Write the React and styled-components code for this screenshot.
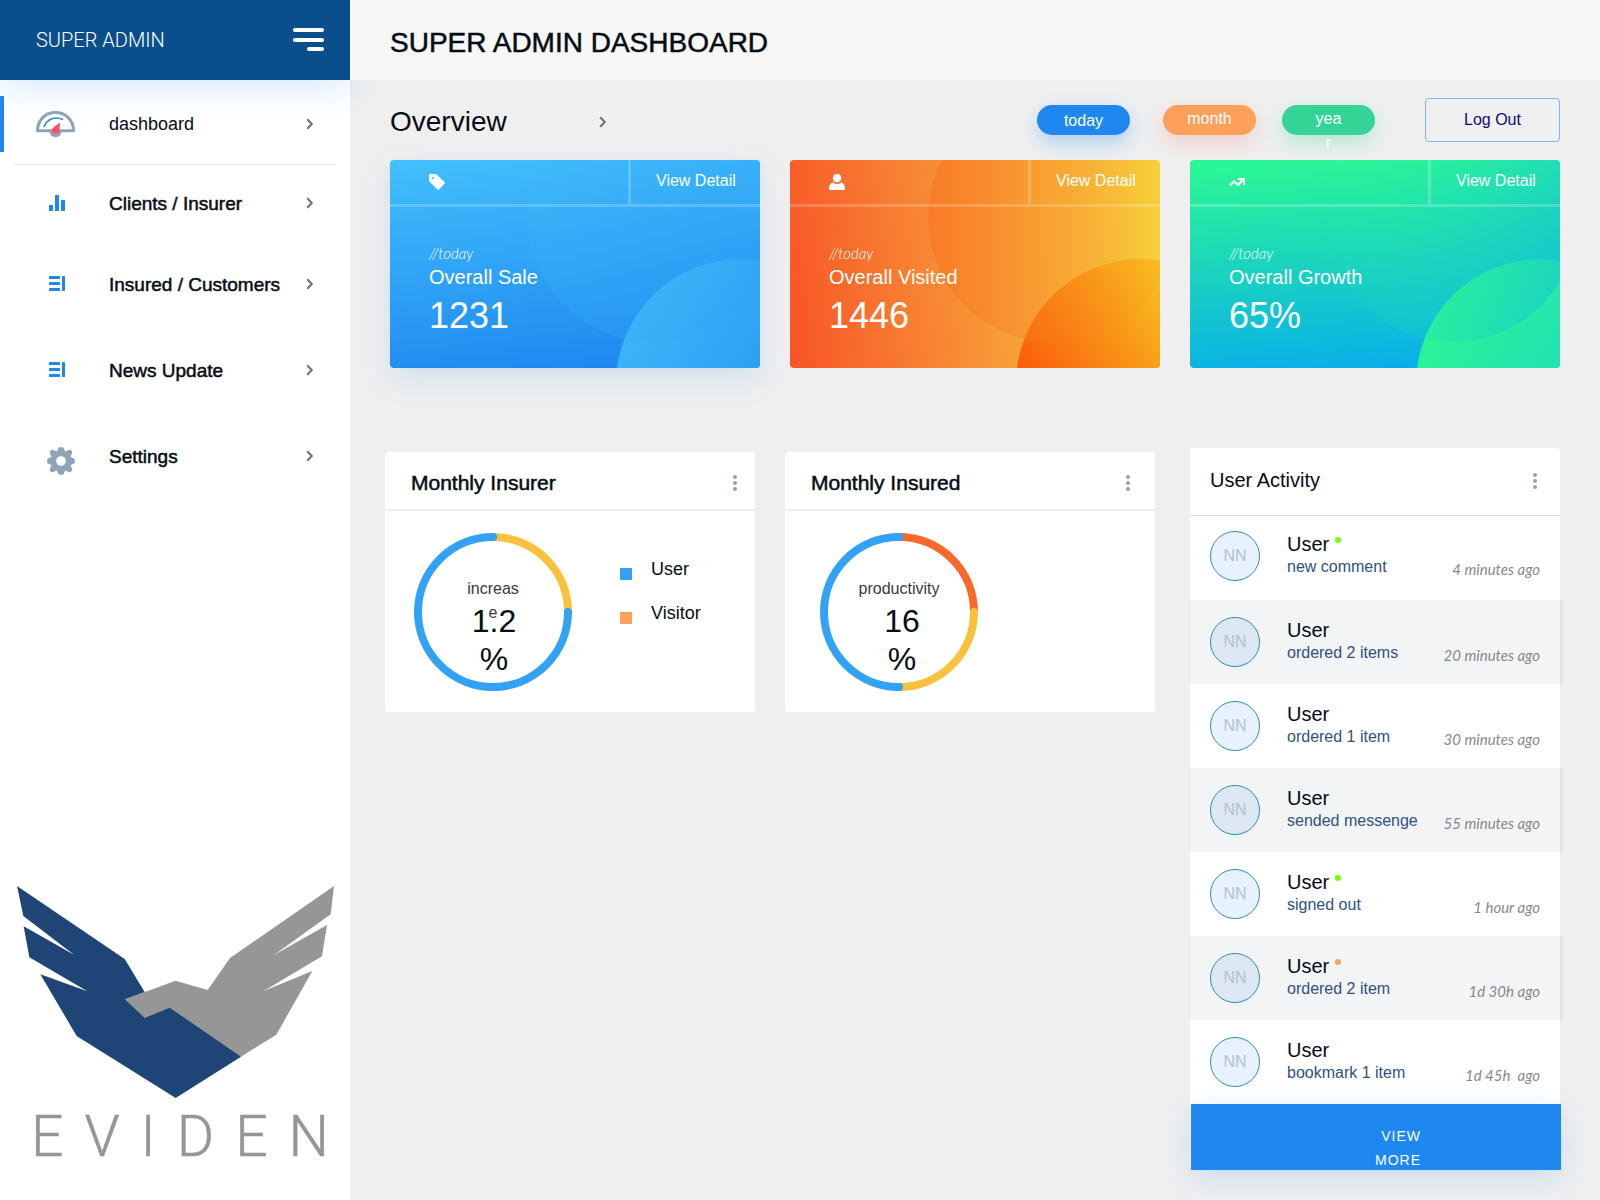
import React from "react";
import styled, { createGlobalStyle, css } from "styled-components";

const GlobalStyle = createGlobalStyle`
  *, *::before, *::after { box-sizing: border-box; }
  body {
    margin: 0;
    background: #efefef;
    color: #040d14;
    font-family: "Liberation Sans", Arial, Helvetica, sans-serif;
  }
  h1, h2, h3, p, ul { margin: 0; padding: 0; }
  ul { list-style: none; }
  button { font-family: inherit; cursor: pointer; border: 0; padding: 0; background: none; }
  a { color: inherit; text-decoration: none; }
  svg { display: block; flex: none; }
`;

const medium = css`
  font-weight: 400;
  -webkit-text-stroke: 0.5px currentColor;
`;

const Page = styled.div`
  display: flex;
  min-height: 100vh;
`;

/* Sidebar */

const Sidebar = styled.aside`
  flex: none;
  width: 350px;
  display: flex;
  flex-direction: column;
  background: #fff;
  padding-bottom: 33px;
`;

const SidebarHead = styled.div`
  display: flex;
  align-items: center;
  justify-content: space-between;
  height: 80px;
  padding: 0 26px 0 36px;
  background: #0a4e8c;
  color: #fff;
  box-shadow: 0 10px 30px rgba(30, 135, 240, 0.16);
`;

const Role = styled.span`
  font: 300 20px/24px Roboto, "Liberation Sans", sans-serif;
`;

const NavItem = styled.li`
  ${(p) =>
    p.$active
      ? css`
          padding: 16px 0 12px;
          border-bottom: 1px solid #e8e8e8;
          border-image: linear-gradient(90deg, transparent 15px, #e6e6e6 15px, #e6e6e6 calc(100% - 15px), transparent calc(100% - 15px)) 1;
        `
      : ""}
`;

const NavLink = styled.a`
  display: flex;
  align-items: center;
  height: ${(p) => p.$height}px;
  padding-right: 36px;
  border-left: 4px solid ${(p) => (p.$active ? "#1e87f0" : "transparent")};
  font-size: ${(p) => (p.$active ? 18 : 19)}px;
  ${(p) => (p.$active ? "" : medium)}
`;

const NavIcon = styled.span`
  width: 105px;
  padding-left: ${(p) => p.$inset}px;
  padding-top: ${(p) => p.$drop || 0}px;
`;

const NavLabel = styled.span`
  flex: 1;
  padding-top: ${(p) => (p.$active ? 0 : 2)}px;
`;

const Brand = styled.div`
  margin-top: auto;
  padding-left: 17px;
`;

const BrandName = styled.div`
  margin: 9px 0 0 14px;
  font: 300 57px/60px Roboto, "Liberation Sans", sans-serif;
  letter-spacing: 21px;
  -webkit-text-stroke: 0.5px currentColor;
  color: #949795;
  white-space: nowrap;
`;

/* Main column */

const Content = styled.div`
  flex: 1;
  min-width: 0;
`;

const TopBar = styled.header`
  display: flex;
  align-items: center;
  height: 80px;
  padding: 6px 40px 0;
  background: #f7f7f7;
`;

const PageTitle = styled.h1`
  font-size: 28px;
  line-height: 32px;
  ${medium}
`;

const Main = styled.main`
  padding: 0 40px 30px;
`;

const OverviewBar = styled.div`
  display: flex;
  align-items: center;
  height: 80px;
`;

const OverviewLead = styled.div`
  display: flex;
  align-items: center;
  padding-top: 3px;
`;

const OverviewTitle = styled.h2`
  width: 209px;
  font-size: 28px;
  font-weight: 400;
`;

const Filters = styled.div`
  display: flex;
  gap: 26px;
  margin-left: auto;
  margin-right: 50px;
`;

const Pill = styled.button`
  display: flex;
  justify-content: center;
  align-items: flex-start;
  width: 93px;
  height: 30px;
  padding-top: 2px;
  border-radius: 15px;
  background: ${(p) => p.$color};
  box-shadow: 0 8px 20px ${(p) => p.$glow};
  color: #fff;
  font-size: 16px;
  line-height: 24px;
  &:first-child {
    margin-right: 7px;
    padding-top: 4px;
  }
`;

const PillText = styled.span`
  max-width: ${(p) => p.$max}px;
  word-break: break-all;
`;

const LogOut = styled.button`
  width: 135px;
  height: 44px;
  border: 1px solid #7fb6f2;
  border-radius: 4px;
  color: #0d0d73;
  font-size: 16px;
`;

const Columns = styled.div`
  display: grid;
  grid-template-columns: repeat(3, 1fr);
  gap: 30px;
  align-items: start;
`;

/* Stat cards */

const StatCard = styled.section`
  position: relative;
  height: 208px;
  border-radius: 4px;
  overflow: hidden;
  color: #fff;
  background: ${(p) => p.$fill};
`;

const StatShell = styled.div`
  border-radius: 4px;
  box-shadow: ${(p) => (p.$raised ? "0 10px 30px rgba(30, 135, 240, 0.15)" : "none")};
`;

const Backdrop = styled.svg`
  position: absolute;
  right: 0;
  bottom: 0;
`;

const StatTop = styled.div`
  position: relative;
  display: flex;
  height: 47px;
  border-bottom: 3px solid rgba(255, 255, 255, 0.2);
`;

const StatIcon = styled.div`
  flex: 1;
  padding: 14px 0 0 39px;
`;

const DetailLink = styled.a`
  width: 132px;
  padding: 9px 0 0 25px;
  border-left: 3px solid rgba(255, 255, 255, 0.2);
  font-size: 16px;
  line-height: 24px;
`;

const StatBody = styled.div`
  position: relative;
  padding: 36px 0 0 39px;
`;

const StatPeriod = styled.p`
  font: italic 300 15px/20px Lato, sans-serif;
`;

const StatName = styled.h3`
  margin-top: 1px;
  font-size: 20px;
  line-height: 26px;
  font-weight: 400;
`;

const StatValue = styled.p`
  margin-top: 4px;
  font-size: 36px;
  line-height: 44px;
`;

/* Panels */

const Lower = styled(Columns)`
  margin-top: 80px;
`;

const Panel = styled.section`
  height: 260px;
  margin: 4px 5px 0 -5px;
  border-radius: 4px;
  background: #fff;
`;

const PanelHead = styled.header`
  display: flex;
  align-items: center;
  justify-content: space-between;
  height: 59px;
  padding: 5px ${(p) => p.$right}px 0 26px;
  border-bottom: 2px solid #eee;
`;

const PanelTitle = styled.h3`
  font-size: 21px;
  ${medium}
`;

const IconButton = styled.button`
  display: block;
`;

const PanelBody = styled.div`
  display: flex;
  padding: 22px 0 0 ${(p) => p.$left}px;
`;

const Donut = styled.div`
  display: grid;
  justify-items: center;
  > * { grid-area: 1 / 1; }
`;

const DonutLabel = styled.span`
  width: ${(p) => p.$width}px;
  margin-top: 44px;
  text-align: center;
  font-size: 16px;
  line-height: 24px;
  word-break: break-all;
  color: #333b41;
`;

const DonutValue = styled.span`
  width: 54px;
  margin-top: 69px;
  margin-left: ${(p) => p.$shift}px;
  text-align: center;
  font-size: 32px;
  line-height: 38px;
`;

const Legend = styled.ul`
  display: grid;
  align-content: start;
  gap: 20px;
  padding: 24px 0 0 48px;
`;

const LegendItem = styled.li`
  display: flex;
  gap: 19px;
  font-size: 18px;
  line-height: 24px;
  &::before {
    content: "";
    width: 12px;
    height: 12px;
    margin-top: 11px;
    background: ${(p) => p.$color};
  }
`;

/* Activity */

const Activity = styled.section`
  border-radius: 4px;
  background: #fff;
`;

const ActivityHead = styled.header`
  display: flex;
  align-items: center;
  justify-content: space-between;
  height: 68px;
  padding: 0 23px 2px 20px;
  border-bottom: 1px solid #dadada;
`;

const ActivityTitle = styled.h3`
  font-size: 20px;
  font-weight: 400;
`;

const ActivityRow = styled.li`
  display: flex;
  height: 84px;
  padding: 17px 20px 0;
  &:first-child {
    padding-top: 15px;
  }
  &:nth-child(even) {
    margin: 0 -3px 0 -1px;
    padding: 17px 23px 0 21px;
    background: rgba(10, 40, 80, 0.05);
  }
`;

const Avatar = styled.span`
  flex: none;
  width: 50px;
  height: 50px;
  border: 1px solid #2c8fae;
  border-radius: 50%;
  background: ${(p) => (p.$dim ? "#dde8f4" : "#e8f2fd")};
  color: #b4c1cb;
  font-size: 16px;
  line-height: 47px;
  text-align: center;
`;

const Who = styled.div`
  flex: 1;
  padding-left: 27px;
  white-space: nowrap;
`;

const UserName = styled.p`
  display: flex;
  gap: 6px;
  font-size: 20px;
  line-height: 26px;
`;

const Status = styled.i`
  width: 6px;
  height: 6px;
  margin-top: 6px;
  border-radius: 50%;
  background: ${(p) => p.$color};
`;

const Action = styled.p`
  font-size: 16px;
  line-height: 20px;
  color: #2d5281;
`;

const When = styled.time`
  padding-top: 28px;
  font: italic 400 15px/20px Lato, sans-serif;
  white-space: pre;
  color: #85898c;
`;

const ViewMore = styled.button`
  display: block;
  width: 100%;
  height: 66px;
  margin-left: 1px;
  padding-top: 20px;
  background: #1e87f0;
  box-shadow: 0 8px 28px rgba(30, 135, 240, 0.18);
  color: #fff;
`;

const ViewMoreText = styled.span`
  display: block;
  width: 90px;
  margin: 0 auto;
  text-align: right;
  font-size: 14px;
  line-height: 24px;
  letter-spacing: 1px;
`;

/* Icons */

const Burger = () => (
  <svg width="31" height="24" viewBox="0 0 31 24" fill="#fff">
    <rect width="31" height="4" rx="2" />
    <rect y="10" width="31" height="4" rx="2" />
    <rect x="14" y="19" width="17" height="4" rx="2" />
  </svg>
);

const Chevron = () => (
  <svg width="8" height="12" viewBox="0 0 8 12" fill="none" stroke="#6f6f6f" strokeWidth="2">
    <path d="M1.2 1.2 5.8 6 1.2 10.8" />
  </svg>
);

const Gauge = () => (
  <svg width="39" height="27" viewBox="0 0 39 27">
    <circle cx="19.5" cy="20" r="6.2" fill="#8fa3b7" />
    <path d="M1.5 19.7C1.5 9 9.5 1.6 19.5 1.6S37.500 9 37.500 19.700Z" fill="#fff" stroke="#8fa3b7" strokeWidth="3" strokeLinejoin="round" />
    <path d="M8 16C11 8 18.500 5 27 8.500" fill="none" stroke="#1e87f0" strokeWidth="1.600" />
    <path d="M24 11.500 23.500 20C22.500 23.500 16 23 15.500 19.500 15.800 17 20 14.500 24 11.500Z" fill="#f4516c" />
  </svg>
);

const Bars = () => (
  <svg width="16" height="16" viewBox="0 0 16 16" fill="#1e87f0">
    <rect y="10" width="4" height="6" rx="0.600" />
    <rect x="6" width="4" height="16" rx="0.600" />
    <rect x="12" y="5" width="4" height="11" rx="0.600" />
  </svg>
);

const ListIcon = () => (
  <svg width="16" height="16" viewBox="0 0 16 16" fill="#1e87f0">
    <rect width="11" height="3" rx="0.600" />
    <rect y="6" width="11" height="3" rx="0.600" />
    <rect y="12" width="11" height="3" rx="0.600" />
    <rect x="13" width="3" height="15" rx="0.600" />
  </svg>
);

const Gear = () => (
  <svg width="28" height="28" viewBox="-14 -14 28 28">
    <g fill="#8fa3b7">
      {[0, 90, 180, 270].map((a) => (
        <g key={a} transform={`rotate(${a})`}>
          <path d="M-4.500 -8.500-2.600 -13Q-2.300 -13.800-1.500 -13.800H1.500Q2.300 -13.800 2.600 -13L4.500 -8.500Z" />
          <path d="M3.500 -9.300 8.500 -11.300Q9.200 -11.500 9.800 -10.900L10.900 -9.800Q11.500 -9.200 11.300 -8.500L9.300 -3.500Z" />
        </g>
      ))}
      <circle r="9.800" />
    </g>
    <circle r="4.800" fill="#fff" />
  </svg>
);

const Dots = () => (
  <svg width="4" height="16" viewBox="0 0 4 16" fill="#8fa3b7">
    <circle cx="2" cy="2" r="2" />
    <circle cx="2" cy="8" r="2" />
    <circle cx="2" cy="14" r="2" />
  </svg>
);

const Tag = () => (
  <svg width="16" height="16" viewBox="0 0 16 16" fill="#fff" fillRule="evenodd">
    <path d="M0 1Q0 0 1 0H7L15.500 8Q16.300 9 15.500 9.800L10 15.500Q9.200 16.200 8.400 15.500L0 7ZM4 3A1.100 1.100 0 1 0 4 5.200 1.100 1.100 0 0 0 4 3Z" />
  </svg>
);

const Person = () => (
  <svg width="16" height="16" viewBox="0 0 16 16" fill="#fff">
    <circle cx="8" cy="4.200" r="4.100" />
    <path d="M0 16V14Q.5 9.800 3.500 8.200 8 12 12.500 8.200 15.500 9.800 16 14V16Z" />
  </svg>
);

const Trend = () => (
  <svg width="16" height="16" viewBox="0 0 16 16">
    <path d="M.8 11.400 5 7.400 9 11 13.500 6.200" fill="none" stroke="#fff" strokeWidth="2.200" />
    <path d="M9 4H16V11H14V6H9Z" fill="#fff" />
  </svg>
);

const Wings = () => (
  <svg width="317" height="212" viewBox="51 48 951 636" role="img" aria-label="Eviden logo">
    <path fill="#949795" d="M375 388 527 332 623 360 690 264 1002 48 992 133 822 255 981 165 966 259 791 363 937 303 829 494 723 560 508 470 434 450Z" />
    <path fill="#1f4476" d="M51 48 374 267 434 366 375 388 434 444 509 413 723 560 527 684 230 498 121 313 262 364 88 262 71 169 222 254 70 138Z" />
  </svg>
);

const ring = 75;
const point = (cx, deg) => {
  const a = ((deg - 90) * Math.PI) / 180;
  return `${cx + ring * Math.cos(a)} ${cx + ring * Math.sin(a)}`;
};

const Ring = ({ arcs }) => (
  <svg width="158" height="158" viewBox="0 0 158 158" fill="none" strokeWidth="8" strokeLinecap="round">
    {arcs.map(([from, to, color]) => (
      <path
        key={from}
        stroke={color}
        d={`M${point(79, from)}A${ring} ${ring} 0 ${to - from > 180 ? 1 : 0} 1 ${point(79, to)}`}
      />
    ))}
  </svg>
);

const Circles = ({ id, first, second }) => (
  <Backdrop width="370" height="208" viewBox="0 0 370 208" aria-hidden="true">
    <defs>
      <linearGradient id={`${id}-a`} x1="0" y1="0.4" x2="1" y2="0.6">
        <stop offset="0" stopColor={first[0]} stopOpacity={first[2]} />
        <stop offset="1" stopColor={first[1]} stopOpacity={first[3]} />
      </linearGradient>
      <linearGradient id={`${id}-b`} x1={second[2]} y1={second[3]} x2={second[4]} y2={second[5]}>
        <stop offset="0" stopColor={second[0]} />
        <stop offset="1" stopColor={second[1]} />
      </linearGradient>
    </defs>
    <circle cx="351" cy="224" r="125" fill={`url(#${id}-b)`} />
    <circle cx="263" cy="57" r="125" fill={`url(#${id}-a)`} />
  </Backdrop>
);

/* Data */

const nav = [
  { label: "dashboard", Icon: Gauge, inset: 32, height: 56, active: true },
  { label: "Clients / Insurer", Icon: Bars, inset: 45, height: 76 },
  { label: "Insured / Customers", Icon: ListIcon, inset: 45, height: 86 },
  { label: "News Update", Icon: ListIcon, inset: 45, height: 86 },
  { label: "Settings", Icon: Gear, inset: 43, height: 86, drop: 10 },
];

const stats = [
  {
    id: "sale", name: "Overall Sale", value: "1231", Icon: Tag, raised: true,
    fill: "linear-gradient(173deg, #42c0fc 0%, #1e87f0 94%)",
    first: ["#3cb8f8", "#2f9ff4", 0.25, 0.25],
    second: ["#3ab4f8", "#2590f1", 0.1, 0.3, 0.75, 0.75],
  },
  {
    id: "visited", name: "Overall Visited", value: "1446", Icon: Person,
    fill: "linear-gradient(82deg, #f85426 0%, #f8a03a 58%, #f6da3e 100%)",
    first: ["#fa6e1c", "#f98a20", 0.5, 0.06],
    second: ["#fb5008", "#f8c422", 0, 0.55, 0.65, 0.1],
  },
  {
    id: "growth", name: "Overall Growth", value: "65%", Icon: Trend,
    fill: "linear-gradient(176deg, #2af598 6%, #08aeea 96%)",
    first: ["#2af598", "#12bed8", 0.03, 0.5],
    second: ["#2af598", "#1cd8c0", 0.1, 0.2, 0.75, 0.65],
  },
];

const users = [
  { action: "new comment", when: "4 minutes ago", dot: "#76ff03" },
  { action: "ordered 2 items", when: "20 minutes ago" },
  { action: "ordered 1 item", when: "30 minutes ago" },
  { action: "sended messenge", when: "55 minutes ago" },
  { action: "signed out", when: "1 hour ago", dot: "#76ff03" },
  { action: "ordered 2 item", when: "1d 30h ago", dot: "#fca05c" },
  { action: "bookmark 1 item", when: "1d 45h  ago" },
];

export default function App() {
  return (
    <>
      <GlobalStyle />
      <Page>
        <Sidebar>
          <SidebarHead>
            <Role>SUPER ADMIN</Role>
            <IconButton aria-label="Toggle menu"><Burger /></IconButton>
          </SidebarHead>
          <nav>
            <ul>
              {nav.map(({ label, Icon, inset, height, active, drop }) => (
                <NavItem key={label} $active={active}>
                  <NavLink href="#" $height={height} $active={active}>
                    <NavIcon $inset={inset} $drop={drop}><Icon /></NavIcon>
                    <NavLabel $active={active}>{label}</NavLabel>
                    <Chevron />
                  </NavLink>
                </NavItem>
              ))}
            </ul>
          </nav>
          <Brand>
            <Wings />
            <BrandName>EVIDEN</BrandName>
          </Brand>
        </Sidebar>

        <Content>
          <TopBar>
            <PageTitle>SUPER ADMIN DASHBOARD</PageTitle>
          </TopBar>
          <Main>
            <OverviewBar>
              <OverviewLead>
                <OverviewTitle>Overview</OverviewTitle>
                <Chevron />
              </OverviewLead>
              <Filters>
                <Pill $color="#1e87f0" $glow="rgba(30,135,240,0.3)"><PillText $max={60}>today</PillText></Pill>
                <Pill $color="#fca05c" $glow="rgba(250,80,60,0.2)"><PillText $max={60}>month</PillText></Pill>
                <Pill $color="#33d496" $glow="rgba(51,212,150,0.3)"><PillText $max={28}>year</PillText></Pill>
              </Filters>
              <LogOut>Log Out</LogOut>
            </OverviewBar>

            <Columns>
              {stats.map(({ id, name, value, Icon, raised, fill, first, second }) => (
                <StatShell key={id} $raised={raised}>
                  <StatCard $fill={fill}>
                    <Circles id={id} first={first} second={second} />
                    <StatTop>
                      <StatIcon><Icon /></StatIcon>
                      <DetailLink href="#">View Detail</DetailLink>
                    </StatTop>
                    <StatBody>
                      <StatPeriod>//today</StatPeriod>
                      <StatName>{name}</StatName>
                      <StatValue>{value}</StatValue>
                    </StatBody>
                  </StatCard>
                </StatShell>
              ))}
            </Columns>

            <Lower>
              <Panel>
                <PanelHead $right={18}>
                  <PanelTitle>Monthly Insurer</PanelTitle>
                  <IconButton aria-label="Insurer options"><Dots /></IconButton>
                </PanelHead>
                <PanelBody $left={29}>
                  <Donut>
                    <Ring arcs={[[0, 90, "#f9c23c"], [90, 360, "#31a2f5"]]} />
                    <DonutLabel $width={56}>increase</DonutLabel>
                    <DonutValue $shift={2}>1.2 %</DonutValue>
                  </Donut>
                  <Legend>
                    <LegendItem $color="#31a2f5">User</LegendItem>
                    <LegendItem $color="#fca05c">Visitor</LegendItem>
                  </Legend>
                </PanelBody>
              </Panel>

              <Panel>
                <PanelHead $right={25}>
                  <PanelTitle>Monthly Insured</PanelTitle>
                  <IconButton aria-label="Insured options"><Dots /></IconButton>
                </PanelHead>
                <PanelBody $left={35}>
                  <Donut>
                    <Ring arcs={[[0, 90, "#f9682c"], [90, 180, "#f9c23c"], [180, 360, "#31a2f5"]]} />
                    <DonutLabel $width={90}>productivity</DonutLabel>
                    <DonutValue $shift={6}>16 %</DonutValue>
                  </Donut>
                </PanelBody>
              </Panel>

              <Activity>
                <ActivityHead>
                  <ActivityTitle>User Activity</ActivityTitle>
                  <IconButton aria-label="Activity options"><Dots /></IconButton>
                </ActivityHead>
                <ul>
                  {users.map(({ action, when, dot }, i) => (
                    <ActivityRow key={i}>
                      <Avatar $dim={i % 2 === 1}>NN</Avatar>
                      <Who>
                        <UserName>User{dot && <Status $color={dot} />}</UserName>
                        <Action>{action}</Action>
                      </Who>
                      <When>{when}</When>
                    </ActivityRow>
                  ))}
                </ul>
                <ViewMore>
                  <ViewMoreText>VIEW<br />MORE</ViewMoreText>
                </ViewMore>
              </Activity>
            </Lower>
          </Main>
        </Content>
      </Page>
    </>
  );
}
